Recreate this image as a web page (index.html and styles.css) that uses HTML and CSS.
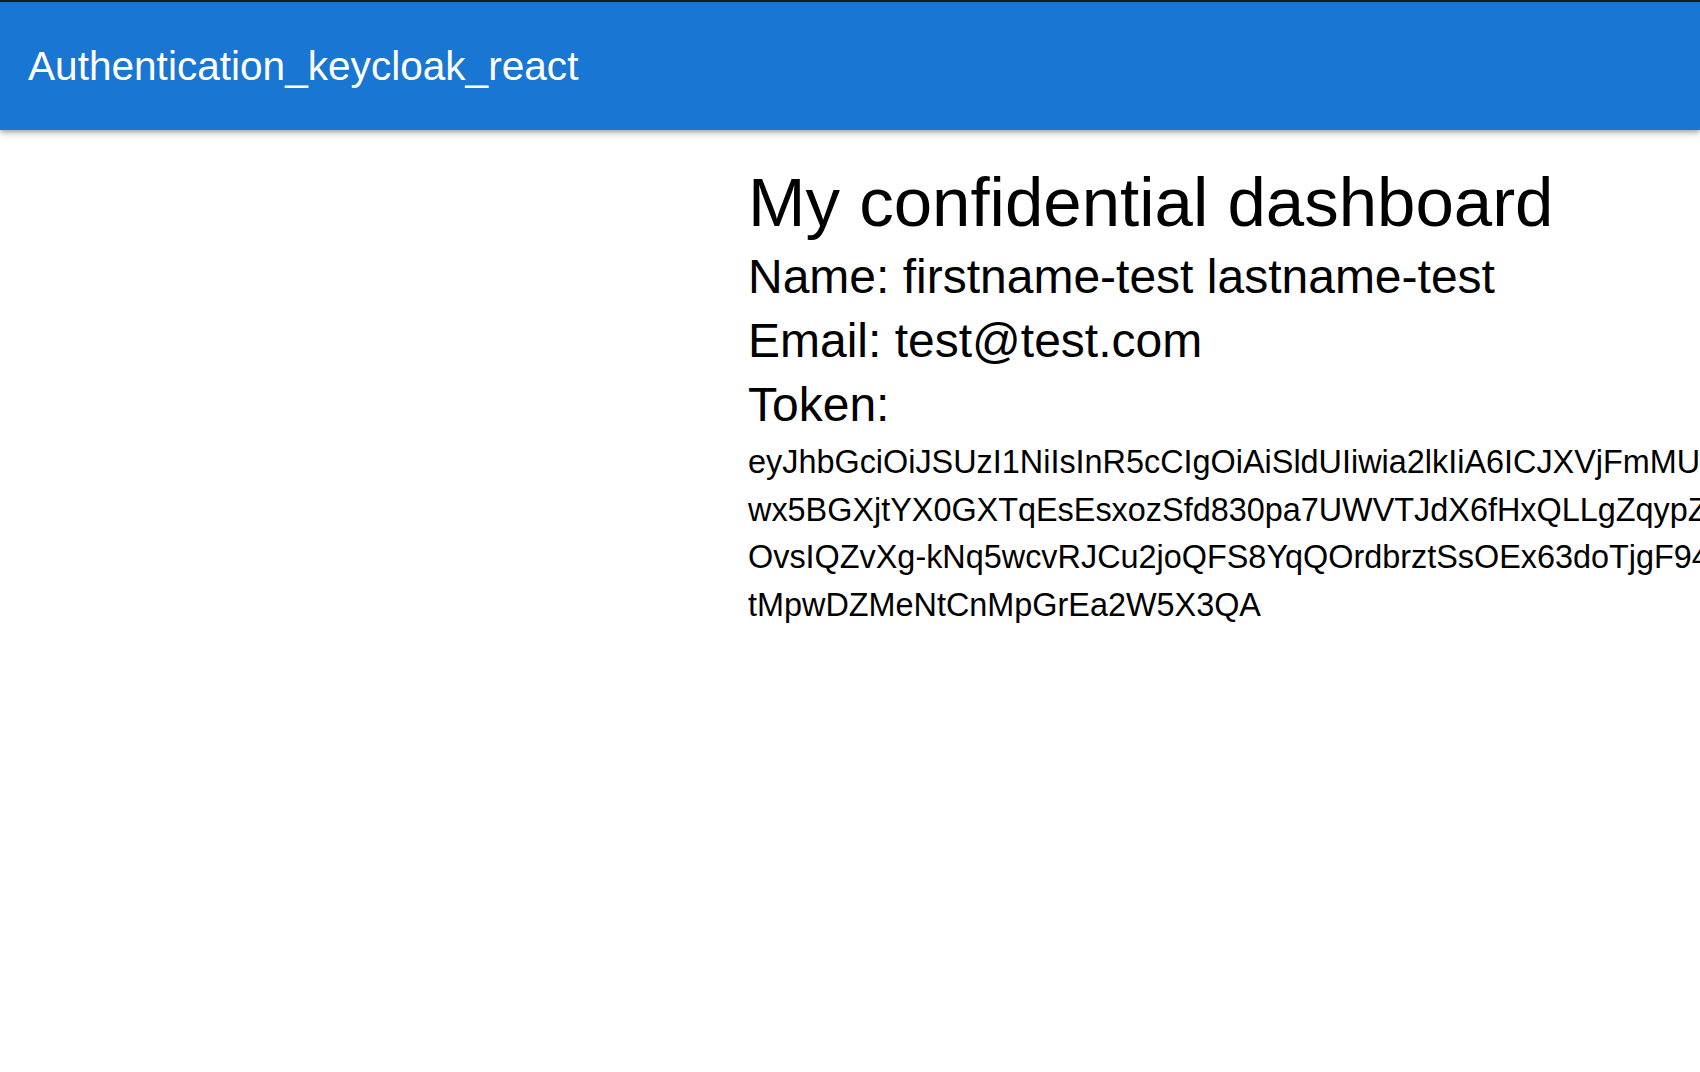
FILE: index.html
```html
<!DOCTYPE html>
<html lang="en">
<head>
<meta charset="utf-8">
<title>Authentication_keycloak_react</title>
<link rel="stylesheet" href="styles.css">
</head>
<body>
<div class="page">
  <header class="app-bar">
    <div class="toolbar">
      <h6 class="app-title">Authentication_keycloak_react</h6>
    </div>
  </header>
  <main class="content">
    <h1 class="dash-title">My confidential dashboard</h1>
    <h2 class="info">Name: firstname-test lastname-test</h2>
    <h2 class="info">Email: test@test.com</h2>
    <h2 class="info">Token:</h2>
    <p class="token">
      <span class="token-line">eyJhbGciOiJSUzI1NiIsInR5cCIgOiAiSldUIiwia2lkIiA6ICJXVjFmMUp3Rk9rQ2NYdW5mT0pqS3pLVmRfM2hZ</span>
      <span class="token-line">wx5BGXjtYX0GXTqEsEsxozSfd830pa7UWVTJdX6fHxQLLgZqypZ1aXNzIjoiaHR0cDovL2xvY2FsaG9zdDo4MDgw</span>
      <span class="token-line">OvsIQZvXg-kNq5wcvRJCu2joQFS8YqQOrdbrztSsOEx63doTjgF94LmWk3vR8pTz2QeUaYdHs0cNoXb7</span>
      <span class="token-line">tMpwDZMeNtCnMpGrEa2W5X3QA</span>
    </p>
  </main>
</div>
</body>
</html>
```
FILE: styles.css
```css
html, body {
  margin: 0;
  padding: 0;
  background: #ffffff;
}

.page {
  min-height: 100vh;
  overflow: hidden;
  font-family: "Liberation Sans", Arial, sans-serif;
  color: #000000;
}

.app-bar {
  background: #1976d2;
  border-top: 2px solid #1b1b1b;
  box-shadow: 0 2px 4px -1px rgba(0, 0, 0, 0.2), 0 4px 5px 0 rgba(0, 0, 0, 0.14), 0 1px 10px 0 rgba(0, 0, 0, 0.12);
  position: relative;
  z-index: 1;
}

.toolbar {
  height: 128px;
  display: flex;
  align-items: center;
  padding: 0 28px;
}

.app-title {
  margin: 0;
  font-size: 40.6px;
  font-weight: 400;
  color: #ffffff;
}

.content {
  padding: 31px 0 0 748px;
}

.dash-title {
  margin: 0;
  font-size: 69px;
  line-height: 84px;
  font-weight: 400;
}

.info {
  margin: 0;
  font-size: 48px;
  line-height: 64px;
  font-weight: 400;
  white-space: nowrap;
}

.token {
  margin: 2px 0 0;
  font-size: 32.4px;
  line-height: 47.6px;
}

.token-line {
  display: block;
  white-space: nowrap;
}
```
